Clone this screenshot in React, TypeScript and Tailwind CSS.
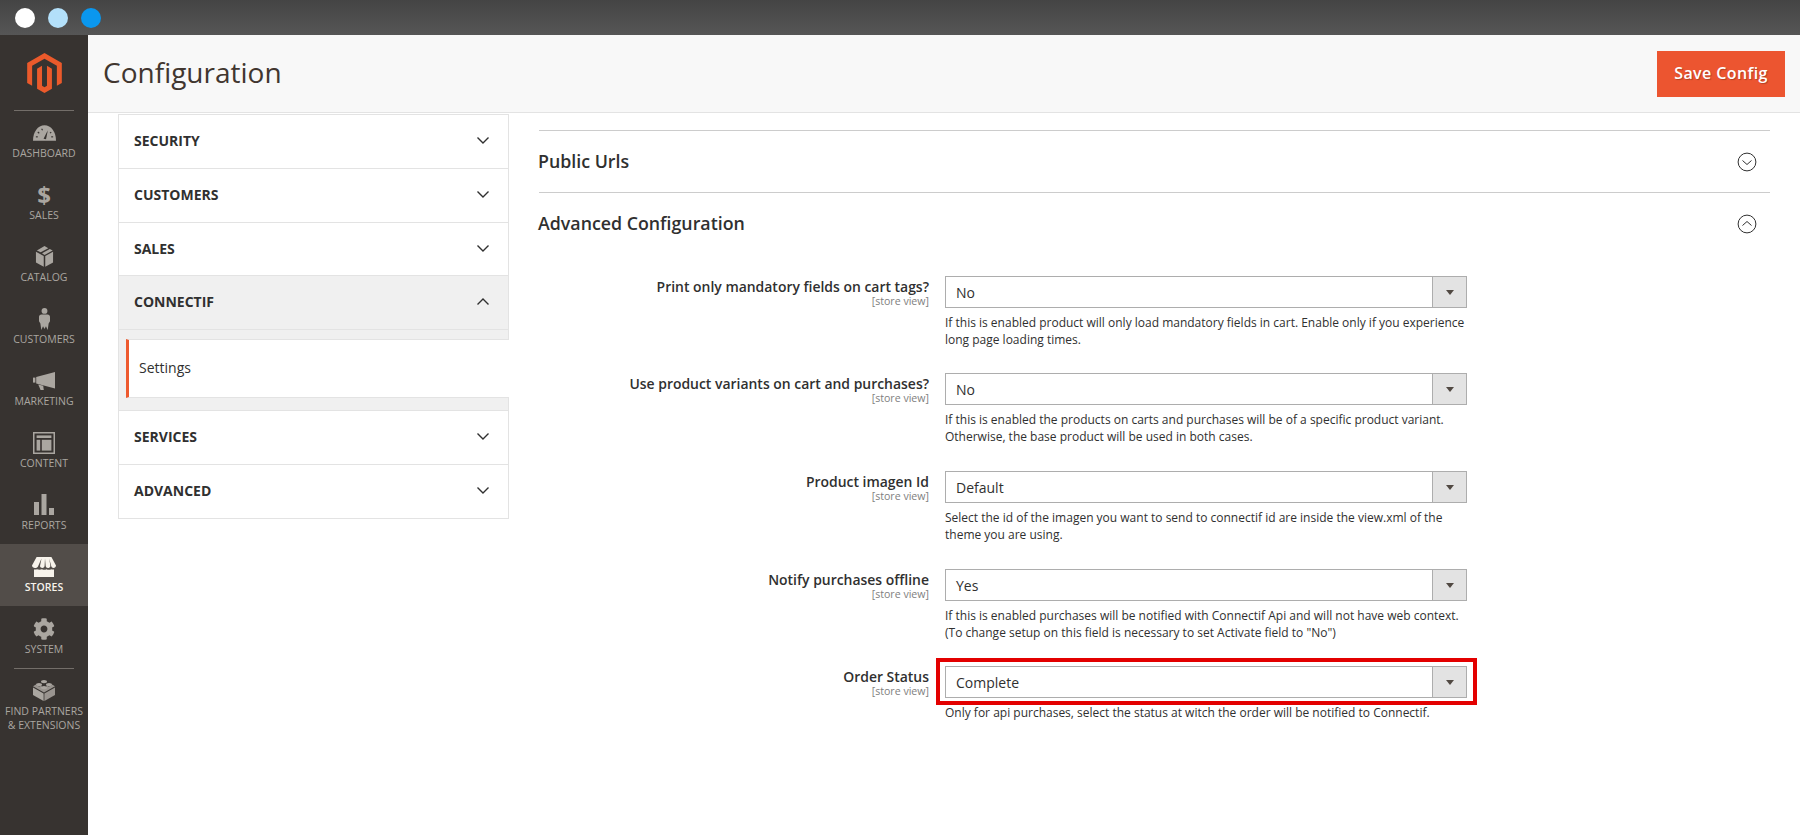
import type { ReactNode } from 'react'
import { FaCog } from 'react-icons/fa'

const font = { fontFamily: '"Open Sans", "Noto Sans", sans-serif' }

function Gauge() {
  return (
    <svg viewBox="0 0 24 16" className="h-[16px] w-[23px] fill-current">
      <path d="M0 16 C0 7 5 0 12 0 C19 0 24 7 24 16 Z" />
      <path d="M11 14 L15.5 5 L13.6 14.6 Z" fill="#373330" />
      <g stroke="#373330" strokeWidth="1.2">
        <path d="M3 12 L5 12" />
        <path d="M5 7 L6.5 8.3" />
        <path d="M9 3.5 L10 5.2" />
        <path d="M19 12 L21 12" />
        <path d="M19 7 L17.8 8.2" />
      </g>
    </svg>
  )
}

function BoxIcon() {
  return (
    <svg viewBox="0 0 20 22" className="h-[21px] w-[19px] fill-current">
      <path d="M10 0 L14 2.2 L6 6.6 L2 4.6 Z" />
      <path d="M15.6 3.1 L18.6 4.7 L10 9.3 L7.4 7.7 Z" />
      <path d="M1 6 L9.2 10.5 L9.2 21.8 L1 17.2 Z" />
      <path d="M19 6 L10.8 10.5 L10.8 21.8 L19 17.2 Z" />
    </svg>
  )
}

function PersonIcon() {
  return (
    <svg viewBox="0 0 12 24" className="h-[24px] w-[11px] fill-current">
      <circle cx="6" cy="3.2" r="3.2" />
      <path d="M2.6 7 L9.4 7 C11 7 11.8 8 12 9.5 L12 14.5 L10.5 17 L9.5 24 L7.6 20 L6 23 L4.4 20 L2.5 24 L1.5 17 L0 14.5 L0 9.5 C0.2 8 1 7 2.6 7 Z" />
    </svg>
  )
}

function MegaphoneIcon() {
  return (
    <svg viewBox="0 0 22 18" className="h-[18px] w-[22px] fill-current">
      <rect x="0" y="5.6" width="2.4" height="5" />
      <path d="M3.2 5 L22 0 V16.4 L3.2 11.4 Z" />
      <path d="M5.2 12.4 L10.2 13.7 L10.8 18 H7.6 Z" />
    </svg>
  )
}

function ContentIcon() {
  return (
    <svg viewBox="0 0 22 22" className="h-[22px] w-[22px] fill-current">
      <path fillRule="evenodd" d="M0 0 H22 V22 H0 Z M1.5 1.5 V20.5 H20.5 V1.5 Z" />
      <rect x="3.6" y="3.4" width="14.8" height="2.6" />
      <rect x="3.6" y="7.8" width="3.6" height="10.8" />
      <rect x="8.8" y="7.8" width="9.6" height="10.8" />
    </svg>
  )
}

function BarsIcon() {
  return (
    <svg viewBox="0 0 20 21" className="h-[21px] w-[20px] fill-current">
      <rect x="0" y="8" width="5" height="13" />
      <rect x="7.5" y="0" width="5" height="21" />
      <rect x="15" y="14" width="5" height="7" />
    </svg>
  )
}

function StoreIcon() {
  return (
    <svg viewBox="0 0 24 20" className="h-[20px] w-[24px] fill-current">
      <path d="M4.6 0 H19.4 L24 8.6 C24 10.2 22.8 11 21.6 11 C20.4 11 19.4 10.2 19.2 9 L17.2 1.5 L18.4 9 C18.2 10.4 17 11 15.9 11 C14.8 11 13.8 10.2 13.7 9 L13 1.5 L12.6 9 C12.5 10.3 11.2 11 10.5 11 C9.2 11 8 10.2 8 9 L9.5 1.5 L6.2 9 C5.6 10.4 4.6 11 3 11 C1.4 11 0 10.2 0 8.6 Z" />
      <path d="M2 12.4 C3 12.7 4 12.7 5 12.3 C6.2 12.9 8.6 13 10 12.3 C11.4 13 13.2 13 14.4 12.3 C15.8 13 18 13 19.2 12.3 C20 12.7 21 12.7 22 12.4 V20 H2 Z" />
    </svg>
  )
}

function BrickIcon() {
  return (
    <svg viewBox="0 0 22 22" className="h-[22px] w-[22px] fill-current">
      <ellipse cx="11" cy="2.6" rx="3" ry="1.7" />
      <ellipse cx="6" cy="5.6" rx="3" ry="1.7" />
      <ellipse cx="16" cy="5.6" rx="3" ry="1.7" />
      <ellipse cx="11" cy="8.6" rx="3" ry="1.7" />
      <path d="M0 7.2 L3 5.6 C3.4 7.6 8 8 8.2 6.6 C8.2 9 13.8 9.6 13.8 6.6 C14 8 18.6 7.6 19 5.6 L22 7.2 L11 13.4 Z" opacity="0.85" />
      <path d="M0 8.4 L10.6 14.4 V22 L0 16 Z" />
      <path d="M22 8.4 L11.4 14.4 V22 L22 16 Z" opacity="0.85" />
    </svg>
  )
}

function NavItem({ icon, label, active }: { icon: ReactNode; label: ReactNode; active?: boolean }) {
  return (
    <div
      className={`flex h-[62px] flex-col items-center pt-[10px] text-center text-[10.5px] leading-[14px] ${
        active ? 'bg-[#524d49] font-semibold text-[#f7f3eb]' : 'text-[#aaa6a0]'
      }`}
    >
      <div className="flex h-[25px] items-center justify-center">{icon}</div>
      <div className="mt-[1px] whitespace-nowrap">{label}</div>
    </div>
  )
}

function Sidebar() {
  return (
    <aside className="flex w-[88px] shrink-0 flex-col bg-[#373330]">
      <div className="flex h-[75px] items-center justify-center">
        <svg viewBox="1.6 0 20.8 24" className="h-[40px] w-[35px] fill-[#eb5a2b]">
          <path d="M12 24l-4.455-2.572v-12l2.97-1.715v12.001l1.485.902 1.485-.902V7.713l2.971 1.715v12L12 24zM22.391 6v12l-2.969 1.714V7.713L12 3.43 4.574 7.713v12.001L1.609 18V6L12 0l10.391 6z" />
        </svg>
      </div>
      <div className="mx-[14px] h-px bg-[#736e69]" />
      <div className="-mt-px">
        <NavItem icon={<Gauge />} label="DASHBOARD" />
        <NavItem icon={<span className="text-[24px] font-bold leading-[25px]">$</span>} label="SALES" />
        <NavItem icon={<BoxIcon />} label="CATALOG" />
        <NavItem icon={<PersonIcon />} label="CUSTOMERS" />
        <NavItem icon={<MegaphoneIcon />} label="MARKETING" />
        <NavItem icon={<ContentIcon />} label="CONTENT" />
        <NavItem icon={<BarsIcon />} label="REPORTS" />
        <NavItem icon={<StoreIcon />} label="STORES" active />
        <NavItem icon={<FaCog className="h-[22px] w-[22px]" />} label="SYSTEM" />
      </div>
      <div className="mx-[14px] h-px bg-[#736e69]" />
      <NavItem
        icon={<BrickIcon />}
        label={
          <div className="mt-[2px]">
            FIND PARTNERS
            <br />& EXTENSIONS
          </div>
        }
      />
    </aside>
  )
}

function Chevron({ up }: { up?: boolean }) {
  return (
    <svg viewBox="0 0 12 7" className="h-[7px] w-[12px] fill-none stroke-[#303030] stroke-[1.4]">
      <path d={up ? 'M0.5 6.5 L6 1 L11.5 6.5' : 'M0.5 0.5 L6 6 L11.5 0.5'} />
    </svg>
  )
}

function MenuRow({ title, open, height = 'h-[54px]' }: { title: string; open?: boolean; height?: string }) {
  return (
    <div
      className={`flex ${height} items-center justify-between border-x border-b border-[#e3e3e3] pb-[2px] pl-[15px] pr-[19px] text-[14px] font-bold text-[#303030] ${
        open ? 'bg-[#f0f0f0]' : 'bg-white'
      }`}
    >
      <span>{title}</span>
      <Chevron up={open} />
    </div>
  )
}

function ConfigMenu() {
  return (
    <div className="ml-[30px] w-[391px] shrink-0">
      <div className="h-px" />
      <div className="border-t border-[#e3e3e3]">
        <MenuRow title="SECURITY" />
        <MenuRow title="CUSTOMERS" />
        <MenuRow title="SALES" height="h-[53px]" />
        <MenuRow title="CONNECTIF" open />
      </div>
      <div className="border-x border-b border-[#e3e3e3] bg-[#f0f0f0]">
        <div className="h-[9px]" />
        <div className="-mr-px ml-[7px] flex h-[59px] items-center border-y border-l-[3px] border-[#e3e3e3] border-l-[#ee5a2f] bg-white pb-[2px] pl-[10px] text-[14px] text-[#303030]">
          Settings
        </div>
        <div className="h-[12px]" />
      </div>
      <MenuRow title="SERVICES" />
      <MenuRow title="ADVANCED" />
    </div>
  )
}

function SectionHead({ title, up }: { title: string; up?: boolean }) {
  return (
    <div className="flex h-[62px] items-center justify-between border-t border-[#cccccc] pr-[13px] text-[17.8px] font-semibold text-[#303030]">
      <span className="-ml-px">{title}</span>
      <svg viewBox="0 0 20 20" className="h-[20px] w-[20px] fill-none stroke-[#303030]">
        <circle cx="10" cy="10" r="8.9" strokeWidth="1" />
        <path d={up ? 'M5.5 11.5 L10 7.5 L14.5 11.5' : 'M5.5 8.5 L10 12.5 L14.5 8.5'} strokeWidth="1" />
      </svg>
    </div>
  )
}

function Select({ value, highlight }: { value: string; highlight?: boolean }) {
  return (
    <div className="relative flex h-[32px] w-[522px] items-stretch border border-[#adadad] bg-white text-[14px] text-[#303030]">
      <div className="flex flex-1 items-center pl-[10px]">{value}</div>
      <div className="flex w-[34px] items-center justify-center border-l border-[#adadad] bg-[#e3e3e3]">
        <div className="h-0 w-0 border-x-[4.5px] border-t-[5px] border-x-transparent border-t-[#514943]" />
      </div>
      {highlight && (
        <div className="absolute -bottom-[8px] -left-[10px] -right-[11px] -top-[9px] border-[4px] border-[#e30000]" />
      )}
    </div>
  )
}

function Field({
  label,
  value,
  help,
  height,
  highlight,
}: {
  label: string
  value: string
  help: ReactNode
  height: string
  highlight?: boolean
}) {
  return (
    <div className={`flex ${height}`}>
      <div className="w-[390px] shrink-0 pt-[1px] text-right">
        <div className="text-[13.95px] font-semibold leading-[19px] text-[#303030]">{label}</div>
        <div className="text-[10.6px] leading-[11px] text-[#808080]">[store view]</div>
      </div>
      <div className="ml-[16px]">
        <Select value={value} highlight={highlight} />
        <div className="mt-[6px] w-[522px] text-[12px] leading-[17px] text-[#303030]">{help}</div>
      </div>
    </div>
  )
}

function ConfigForm() {
  return (
    <div className="ml-[30px] mr-[30px] min-w-0 flex-1 pt-[17px]">
      <SectionHead title="Public Urls" />
      <SectionHead title="Advanced Configuration" up />
      <div className="pt-[22px]">
        <Field
          label="Print only mandatory fields on cart tags?"
          value="No"
          height="h-[97px]"
          help="If this is enabled product will only load mandatory fields in cart. Enable only if you experience long page loading times."
        />
        <Field
          label="Use product variants on cart and purchases?"
          value="No"
          height="h-[98px]"
          help="If this is enabled the products on carts and purchases will be of a specific product variant. Otherwise, the base product will be used in both cases."
        />
        <Field
          label="Product imagen Id"
          value="Default"
          height="h-[98px]"
          help="Select the id of the imagen you want to send to connectif id are inside the view.xml of the theme you are using."
        />
        <Field
          label="Notify purchases offline"
          value="Yes"
          height="h-[97px]"
          help={'If this is enabled purchases will be notified with Connectif Api and will not have web context. (To change setup on this field is necessary to set Activate field to "No")'}
        />
        <Field
          label="Order Status"
          value="Complete"
          height="h-[60px]"
          highlight
          help="Only for api purchases, select the status at witch the order will be notified to Connectif."
        />
      </div>
    </div>
  )
}

export default function App() {
  return (
    <div className="flex h-[835px] w-[1800px] flex-col overflow-hidden bg-white" style={font}>
      <div className="flex h-[35px] shrink-0 items-center gap-[13px] bg-gradient-to-b from-[#444444] to-[#565656] pl-[15px]">
        <div className="h-[20px] w-[20px] rounded-full bg-white" />
        <div className="h-[20px] w-[20px] rounded-full bg-[#b3e0fa]" />
        <div className="h-[20px] w-[20px] rounded-full bg-[#0a97ee]" />
      </div>
      <div className="flex min-h-0 flex-1">
        <Sidebar />
        <div className="flex min-w-0 flex-1 flex-col">
          <header className="flex h-[78px] shrink-0 items-center justify-between border-b border-[#e3e3e3] bg-[#f8f8f8] pl-[15px] pr-[15px]">
            <h1 className="mb-[4px] text-[28px] font-normal text-[#41362f]">Configuration</h1>
            <button
              type="button"
              className="h-[46px] w-[128px] bg-[#ec5530] pb-[1px] text-[16px] font-semibold tracking-[0.025em] text-white [text-shadow:1px_1px_1px_rgba(0,0,0,0.25)]"
            >
              Save Config
            </button>
          </header>
          <div className="flex">
            <ConfigMenu />
            <ConfigForm />
          </div>
        </div>
      </div>
    </div>
  )
}
